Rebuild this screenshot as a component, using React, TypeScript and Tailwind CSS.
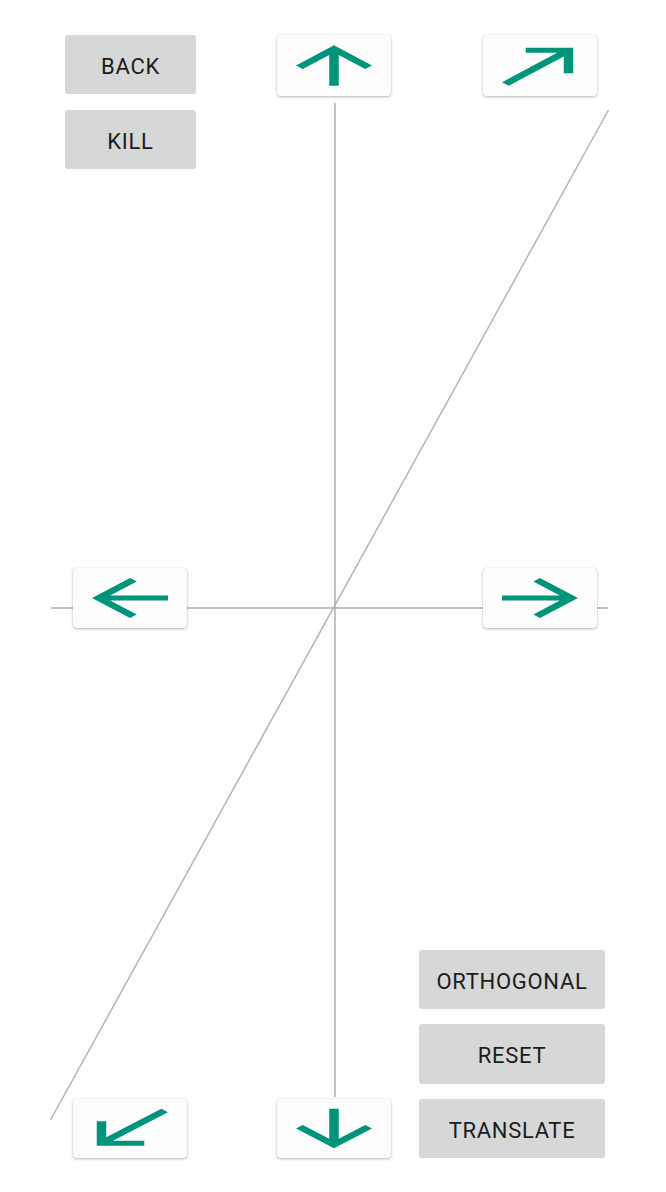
import React from "react";

const P = {
  up: "M4 12l1.41 1.41L11 7.83V20h2V7.83l5.58 5.59L20 12l-8-8-8 8z",
  down: "M20 12l-1.41-1.41L13 16.17V4h-2v12.17l-5.58-5.59L4 12l8 8 8-8z",
  left: "M20 11H7.83l5.59-5.59L12 4l-8 8 8 8 1.41-1.41L7.83 13H20v-2z",
  right: "M12 4l-1.41 1.41L16.17 11H4v2h12.17l-5.58 5.59L12 20l8-8z",
  ne: "M9 5v2h6.59L4 18.59 5.41 20 17 8.41V15h2V5z",
  sw: "M15 19v-2H8.41L20 5.41 18.59 4 7 15.59V9H5v10h10z",
};

function ArrowButton({ d, className = "" }: { d: string; className?: string }) {
  return (
    <button
      className={
        "w-[114px] bg-[#fdfdfd] rounded-[4px] shadow-[0_1px_3px_rgba(0,0,0,0.28),0_0_1px_rgba(0,0,0,0.12)] shrink-0 p-0 " +
        className
      }
    >
      <svg
        viewBox="0 0 24 24"
        preserveAspectRatio="none"
        className="w-full h-full block"
      >
        <path d={d} fill="#00947a" />
      </svg>
    </button>
  );
}

function GrayButton({ label, className = "" }: { label: string; className?: string }) {
  return (
    <button
      className={
        "bg-[#d6d7d7] rounded-[3px] flex items-center justify-center pt-[4px] text-[22px] font-normal text-[#1c1c1c] tracking-[0.7px] leading-none shrink-0 " +
        className
      }
      style={{ fontFamily: "Roboto, 'Noto Sans', sans-serif" }}
    >
      {label}
    </button>
  );
}

export default function App() {
  return (
    <div className="relative w-[666px] h-[1192px] bg-white overflow-hidden">
      <svg
        className="absolute inset-0"
        width="666"
        height="1192"
        viewBox="0 0 666 1192"
      >
        <line x1="335" y1="103" x2="335" y2="1097" stroke="#acacac" strokeWidth="1.5" />
        <line x1="51" y1="608" x2="608" y2="608" stroke="#acacac" strokeWidth="1.5" />
        <line x1="608.5" y1="110" x2="50.5" y2="1120" stroke="#b4b4b4" strokeWidth="1.5" />
      </svg>

      <div className="relative flex flex-col h-full">
        {/* Top row */}
        <div className="flex items-start pt-[35px]">
          <div className="ml-[65px] w-[131px] flex flex-col gap-[16px]">
            <GrayButton label="BACK" className="h-[59px] w-full" />
            <GrayButton label="KILL" className="h-[59px] w-full" />
          </div>
          <ArrowButton d={P.up} className="ml-[81px] h-[61px]" />
          <ArrowButton d={P.ne} className="ml-[92px] h-[61px]" />
        </div>

        {/* Middle row */}
        <div className="flex items-start mt-[399px]">
          <ArrowButton d={P.left} className="ml-[73px] h-[60px]" />
          <ArrowButton d={P.right} className="ml-[296px] h-[60px]" />
        </div>

        {/* Bottom row */}
        <div className="flex items-end mt-auto pb-[34px]">
          <ArrowButton d={P.sw} className="ml-[73px] h-[59px]" />
          <ArrowButton d={P.down} className="ml-[90px] h-[59px]" />
          <div className="ml-[28px] w-[186px] flex flex-col gap-[15px]">
            <GrayButton label="ORTHOGONAL" className="h-[59px] w-full" />
            <GrayButton label="RESET" className="h-[60px] w-full" />
            <GrayButton label="TRANSLATE" className="h-[59px] w-full" />
          </div>
        </div>
      </div>
    </div>
  );
}
